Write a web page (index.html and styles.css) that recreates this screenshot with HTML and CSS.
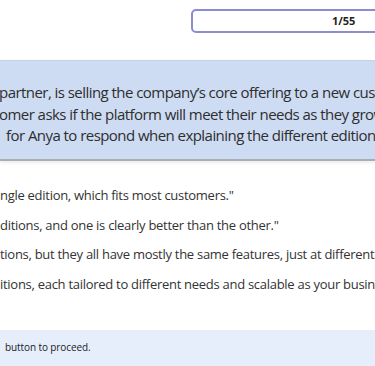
FILE: index.html
```html
<!DOCTYPE html>
<html lang="en">
<head>
  <meta charset="UTF-8">
  <title>Question 1</title>
  <link rel="stylesheet" href="styles.css">
</head>
<body>
  <div class="top-row">
    <div class="counter">1/55</div>
  </div>
  <div class="question">
    <div class="q-line first">partner, is selling the company’s core offering to a new customer.</div>
    <div class="q-line second">omer asks if the platform will meet their needs as they grow.</div>
    <div class="q-line third">for Anya to respond when explaining the different editions?</div>
  </div>
  <div class="options">
    <div class="option">ngle edition, which fits most customers."</div>
    <div class="option">ditions, and one is clearly better than the other."</div>
    <div class="option">tions, but they all have mostly the same features, just at different prices."</div>
    <div class="option">itions, each tailored to different needs and scalable as your business grows."</div>
  </div>
  <div class="footer">button to proceed.</div>
</body>
</html>
```

FILE: styles.css
```css
body {
  margin: 0;
  font-family: 'Open Sans', sans-serif;
  background-color: #fff;
  color: #333;
  width: 375px;
  height: 366px;
  overflow: hidden;
}
.top-row {
  height: 60px;
  padding-top: 9px;
  padding-left: 191px;
  box-sizing: border-box;
}
.counter {
  width: 200px;
  height: 24px;
  border: 2px solid #8c8cd0;
  border-radius: 5px;
  box-sizing: border-box;
  font-size: 11px;
  font-weight: bold;
  color: #222;
  line-height: 20px;
  padding-left: 139px;
}
.question {
  background-color: #cddcf3;
  border-top: 1px solid #c4d0e6;
  height: 101px;
  padding-top: 21px;
  box-sizing: border-box;
  border-bottom: 2px solid #a9adb5;
  box-shadow: 0 2px 3px rgba(0, 0, 0, 0.08);
  font-size: 15px;
  letter-spacing: -0.55px;
  line-height: 21.5px;
  color: #2e2e2e;
}
.q-line {
  white-space: nowrap;
}
.q-line.first {
  margin-left: -1px;
}
.q-line.second {
  margin-left: -1px;
}
.q-line.third {
  margin-left: 6px;
}
.options {
  padding-top: 24px;
  font-size: 13px;
  letter-spacing: -0.28px;
  height: 113px;
}
.option {
  white-space: nowrap;
  height: 29.7px;
  line-height: 20px;
}
.footer {
  margin-top: 32px;
  background-color: #e6eefc;
  height: 40px;
  font-size: 10px;
  letter-spacing: -0.1px;
  padding-left: 5px;
  padding-top: 10px;
  box-sizing: border-box;
  color: #222;
}
```
